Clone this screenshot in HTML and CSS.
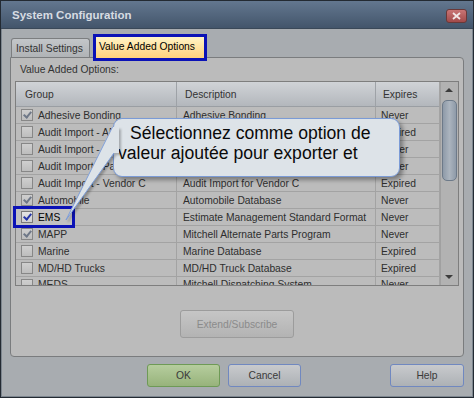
FILE: index.html
```html
<!DOCTYPE html>
<html lang="fr">
<head>
  <meta charset="UTF-8" />
  <title>System Configuration</title>
  <link rel="stylesheet" href="styles.css">
</head>
<body>
  <div class="window">
    <div class="titlebar">
      <span class="title">System Configuration</span>
      <span class="close">
        <svg width="9" height="8" viewBox="0 0 9 8"><path d="M1 1L8 7M8 1L1 7" stroke="#f2e6e6" stroke-width="1.8" /></svg>
      </span>
    </div>

    <div class="content">
      <div class="tabs">
        <div class="tab">Install Settings</div>
        <div class="tab active">Value Added Options</div>
      </div>

      <div class="panel">
        <div class="panel-label">Value Added Options:</div>

        <div class="list">
          <div class="grid">
            <div class="head">Group</div>
            <div class="head">Description</div>
            <div class="head">Expires</div>

            <div class="cell group"><span class="check on"></span>Adhesive Bonding</div>
            <div class="cell">Adhesive Bonding</div>
            <div class="cell exp">Never</div>

            <div class="cell group"><span class="check"></span>Audit Import - APD</div>
            <div class="cell">Audit Import for APD</div>
            <div class="cell exp">Expired</div>

            <div class="cell group"><span class="check"></span>Audit Import - CCC</div>
            <div class="cell">Audit Import for CCC</div>
            <div class="cell exp">Never</div>

            <div class="cell group"><span class="check"></span>Audit Import - Pathways</div>
            <div class="cell">Audit Import for Pathways</div>
            <div class="cell exp">Never</div>

            <div class="cell group"><span class="check"></span>Audit Import - Vendor C</div>
            <div class="cell">Audit Import for Vendor C</div>
            <div class="cell exp">Expired</div>

            <div class="cell group"><span class="check on"></span>Automobile</div>
            <div class="cell">Automobile Database</div>
            <div class="cell exp">Never</div>

            <div class="cell group flush"><span class="mark"><span class="check on blue"></span>EMS</span></div>
            <div class="cell">Estimate Management Standard Format</div>
            <div class="cell exp">Never</div>

            <div class="cell group"><span class="check on"></span>MAPP</div>
            <div class="cell">Mitchell Alternate Parts Program</div>
            <div class="cell exp">Never</div>

            <div class="cell group"><span class="check"></span>Marine</div>
            <div class="cell">Marine Database</div>
            <div class="cell exp">Expired</div>

            <div class="cell group"><span class="check"></span>MD/HD Trucks</div>
            <div class="cell">MD/HD Truck Database</div>
            <div class="cell exp">Expired</div>

            <div class="cell group cut"><span class="check"></span>MEDS</div>
            <div class="cell cut">Mitchell Dispatching System</div>
            <div class="cell exp cut">Never</div>
          </div>

          <div class="scrollbar">
            <div class="arrow up"></div>
            <div class="thumb"></div>
            <div class="arrow down"></div>
          </div>
        </div>

        <div class="panel-actions">
          <button class="btn disabled">Extend/Subscribe</button>
        </div>
      </div>

      <div class="actions">
        <button class="btn ok">OK</button>
        <button class="btn">Cancel</button>
        <button class="btn help">Help</button>
      </div>
    </div>

    <div class="callout">Sélectionnez comme option de valeur ajoutée pour exporter et</div>
    <svg class="tail" width="62" height="104" viewBox="60 120 62 104">
      <polygon points="112,127 119,127 119,153 114,153 66,220" fill="#dde3e8" />
      <path d="M112.5 127L66 220L114 153" fill="none" stroke="#7b9bd6" stroke-width="1" />
    </svg>
  </div>
</body>
</html>
```

FILE: styles.css
```css
body {
  margin: 0;
  font-family: 'Liberation Sans', Arial, sans-serif;
  font-size: 10.3px;
  color: #2e2e2e;
  background: #a8acb0;
}

.window {
  position: relative;
  width: 474px;
  height: 398px;
  box-sizing: border-box;
  border: 1px solid #232a32;
  box-shadow: inset 0 0 0 1px #7d868f;
  background: #a8acb0;
  display: flex;
  flex-direction: column;
}

.titlebar {
  height: 28px;
  display: flex;
  align-items: center;
  justify-content: space-between;
  padding: 0 6px 0 11px;
  background: linear-gradient(#63778f, #43556b);
  border-bottom: 1px solid #3a4858;
  box-sizing: border-box;
}

.title {
  font-weight: bold;
  font-size: 11.5px;
  color: #d7dce2;
}

.close {
  width: 21px;
  height: 14px;
  margin-top: 2px;
  box-sizing: border-box;
  border: 1px solid #6a3838;
  border-radius: 3px;
  background: linear-gradient(#c97474, #a24a4a);
  display: flex;
  align-items: center;
  justify-content: center;
}

.content {
  padding: 5px 9px 0 9px;
  display: flex;
  flex-direction: column;
}

.tabs {
  height: 23px;
  display: flex;
  align-items: flex-end;
}

.tab {
  height: 19px;
  width: 79px;
  margin-left: 1px;
  box-sizing: border-box;
  padding-left: 4px;
  display: flex;
  align-items: center;
  border: 1px solid #7c7e80;
  border-bottom: none;
  border-radius: 3px 3px 0 0;
  background: linear-gradient(#c3c6c9, #b0b3b6);
  color: #333;
}

.tab.active {
  position: relative;
  z-index: 2;
  width: 114px;
  height: 27px;
  margin-left: 3px;
  margin-bottom: -4px;
  padding: 0 0 3px 3px;
  border: 3px solid #0b12b6;
  border-radius: 0;
  background: linear-gradient(#fff3c6, #ffd27c);
  color: #000;
}

.panel {
  height: 300px;
  box-sizing: border-box;
  padding: 5px 4px 0 4px;
  border: 1px solid #7a7c7e;
  border-radius: 0 4px 4px 4px;
  background: #bbbbbb;
  display: flex;
  flex-direction: column;
}

.panel-label {
  height: 14px;
  line-height: 14px;
  padding-left: 5px;
  margin-bottom: 4px;
  color: #333;
}

.list {
  height: 205px;
  box-sizing: border-box;
  border: 1px solid #7e7e7e;
  display: flex;
  background: #bcbcbc;
}

.grid {
  flex: 1;
  display: grid;
  grid-template-columns: 161px 199px 1fr;
  grid-template-rows: 25px repeat(10, 17px) 8px;
}

.head {
  box-sizing: border-box;
  display: flex;
  align-items: center;
  padding-left: 8px;
  border-right: 1px solid #9ea2a7;
  border-bottom: 1px solid #9a9ea3;
  background: linear-gradient(#d0d3d7, #b3b7bc);
  color: #333;
}

.head:first-child {
  padding-left: 9px;
}

.head:nth-child(3) {
  padding-left: 7px;
  border-right: 1px solid #a3a3a3;
}

.cell {
  box-sizing: border-box;
  display: flex;
  align-items: center;
  padding-left: 6px;
  border-right: 1px solid #a3a3a3;
  border-bottom: 1px solid #a3a3a3;
  white-space: nowrap;
  overflow: hidden;
}

.cell.exp {
  padding-left: 5px;
}

.cell.group {
  padding-left: 5px;
  gap: 5px;
}

.cell.flush {
  padding-left: 0;
  overflow: visible;
}

.cell.cut {
  align-items: flex-start;
  border-bottom: none;
  line-height: 16px;
}

.cell.cut .check {
  margin-top: 2px;
}

.check {
  width: 12px;
  height: 12px;
  box-sizing: border-box;
  flex: none;
  border: 1px solid #878787;
  background: linear-gradient(#cfcfcf, #bdbdbd);
  position: relative;
}

.check.on::after {
  content: '';
  position: absolute;
  left: 3px;
  top: 0px;
  width: 3px;
  height: 6px;
  border: solid #6f7888;
  border-width: 0 2px 2px 0;
  transform: rotate(40deg);
}

.check.blue {
  border-color: #7a7a7a;
  background: linear-gradient(#e4e4e4, #d0d0d0);
}

.check.blue::after {
  border-color: #2535a8;
}

.mark {
  height: 16px;
  width: 56px;
  box-sizing: border-box;
  padding-left: 5px;
  display: flex;
  align-items: center;
  gap: 5px;
  outline: 3px solid #0b12b6;
  background: #c2c2c2;
  color: #000;
  position: relative;
  z-index: 1;
}

.scrollbar {
  width: 18px;
  box-sizing: border-box;
  border-left: 1px solid #a0a0a0;
  background: #b2b2b2;
  display: flex;
  flex-direction: column;
}

.arrow {
  height: 17px;
  position: relative;
}

.arrow::after {
  content: '';
  position: absolute;
  left: 4px;
  top: 6px;
  border-left: 4px solid transparent;
  border-right: 4px solid transparent;
}

.arrow.up::after {
  border-bottom: 4px solid #3c3c3c;
}

.arrow.down {
  margin-top: auto;
}

.arrow.down::after {
  top: 7px;
  border-top: 4px solid #3c3c3c;
}

.thumb {
  height: 79px;
  margin: 1px 1px 0 1px;
  border: 1px solid #6d7a89;
  border-radius: 5px;
  background: linear-gradient(90deg, #8e9aa8, #abb4be 50%, #8e9aa8);
}

.panel-actions {
  display: flex;
  justify-content: center;
  margin-top: 24px;
}

.btn {
  font-family: inherit;
  font-size: 10.3px;
  height: 23px;
  width: 73px;
  padding: 0;
  border: 1px solid #7088c0;
  border-radius: 3px;
  background: linear-gradient(#c8cacd, #adb1b5);
  color: #3a3a3a;
}

.btn.disabled {
  width: 114px;
  height: 28px;
  border-color: #9c9c9c;
  background: linear-gradient(#c6c6c6, #b3b3b3);
  color: #8b8b8b;
}

.actions {
  margin-top: 7px;
  display: flex;
  gap: 8px;
}

.btn.ok {
  margin-left: 137px;
  border-color: #6e9a56;
  background: linear-gradient(#b6cd9e, #97b37b);
}

.btn.help {
  margin-left: auto;
  width: 74px;
}

.callout {
  position: absolute;
  left: 112px;
  top: 117px;
  width: 287px;
  height: 59px;
  box-sizing: border-box;
  padding: 4px 4px 0 4px;
  border: 1px solid #7b9bd6;
  border-radius: 9px;
  background: #dde3e8;
  box-shadow: 3px 3px 4px rgba(0, 0, 0, 0.35);
  font-size: 17.6px;
  line-height: 20px;
  color: #0a0a0a;
  text-indent: 12px;
  z-index: 3;
}

.tail {
  position: absolute;
  left: 59px;
  top: 119px;
  z-index: 4;
  filter: drop-shadow(2px 2px 1px rgba(0, 0, 0, 0.25));
}
```
